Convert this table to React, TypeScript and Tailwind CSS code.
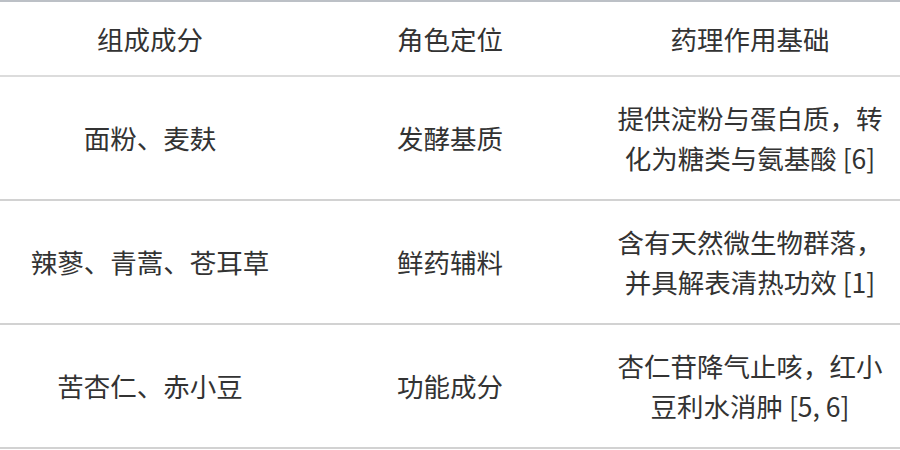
import React from "react";

const rows = [
  { a: "面粉、麦麸", b: "发酵基质", c: "提供淀粉与蛋白质，转化为糖类与氨基酸 [6]" },
  { a: "辣蓼、青蒿、苍耳草", b: "鲜药辅料", c: "含有天然微生物群落，并具解表清热功效 [1]" },
  { a: "苦杏仁、赤小豆", b: "功能成分", c: "杏仁苷降气止咳，红小豆利水消肿 [5, 6]" },
];

export default function App() {
  return (
    <div
      className="w-[900px] h-[450px] bg-white overflow-hidden text-[#333333]"
      style={{ fontFamily: '"Noto Sans CJK SC", "Noto Sans", sans-serif' }}
    >
      <table className="w-[900px] table-fixed border-collapse text-[26.5px] leading-[40px]">
        <thead>
          <tr className="border-t-2 border-b-2 border-t-[#bcc0c6] border-b-[#dcdcdc]">
            <th className="w-[300px] h-[75px] px-4 font-normal text-center align-middle">组成成分</th>
            <th className="w-[300px] h-[75px] px-4 font-normal text-center align-middle">角色定位</th>
            <th className="w-[300px] h-[75px] px-4 font-normal text-center align-middle">药理作用基础</th>
          </tr>
        </thead>
        <tbody>
          {rows.map((r, i) => (
            <tr key={i} className="border-b-2 border-b-[#d2d2d2]">
              <td className="h-[124px] px-4 text-center align-middle">{r.a}</td>
              <td className="h-[124px] px-4 text-center align-middle">{r.b}</td>
              <td className="h-[124px] px-3 text-center align-middle">{r.c}</td>
            </tr>
          ))}
        </tbody>
      </table>
    </div>
  );
}
